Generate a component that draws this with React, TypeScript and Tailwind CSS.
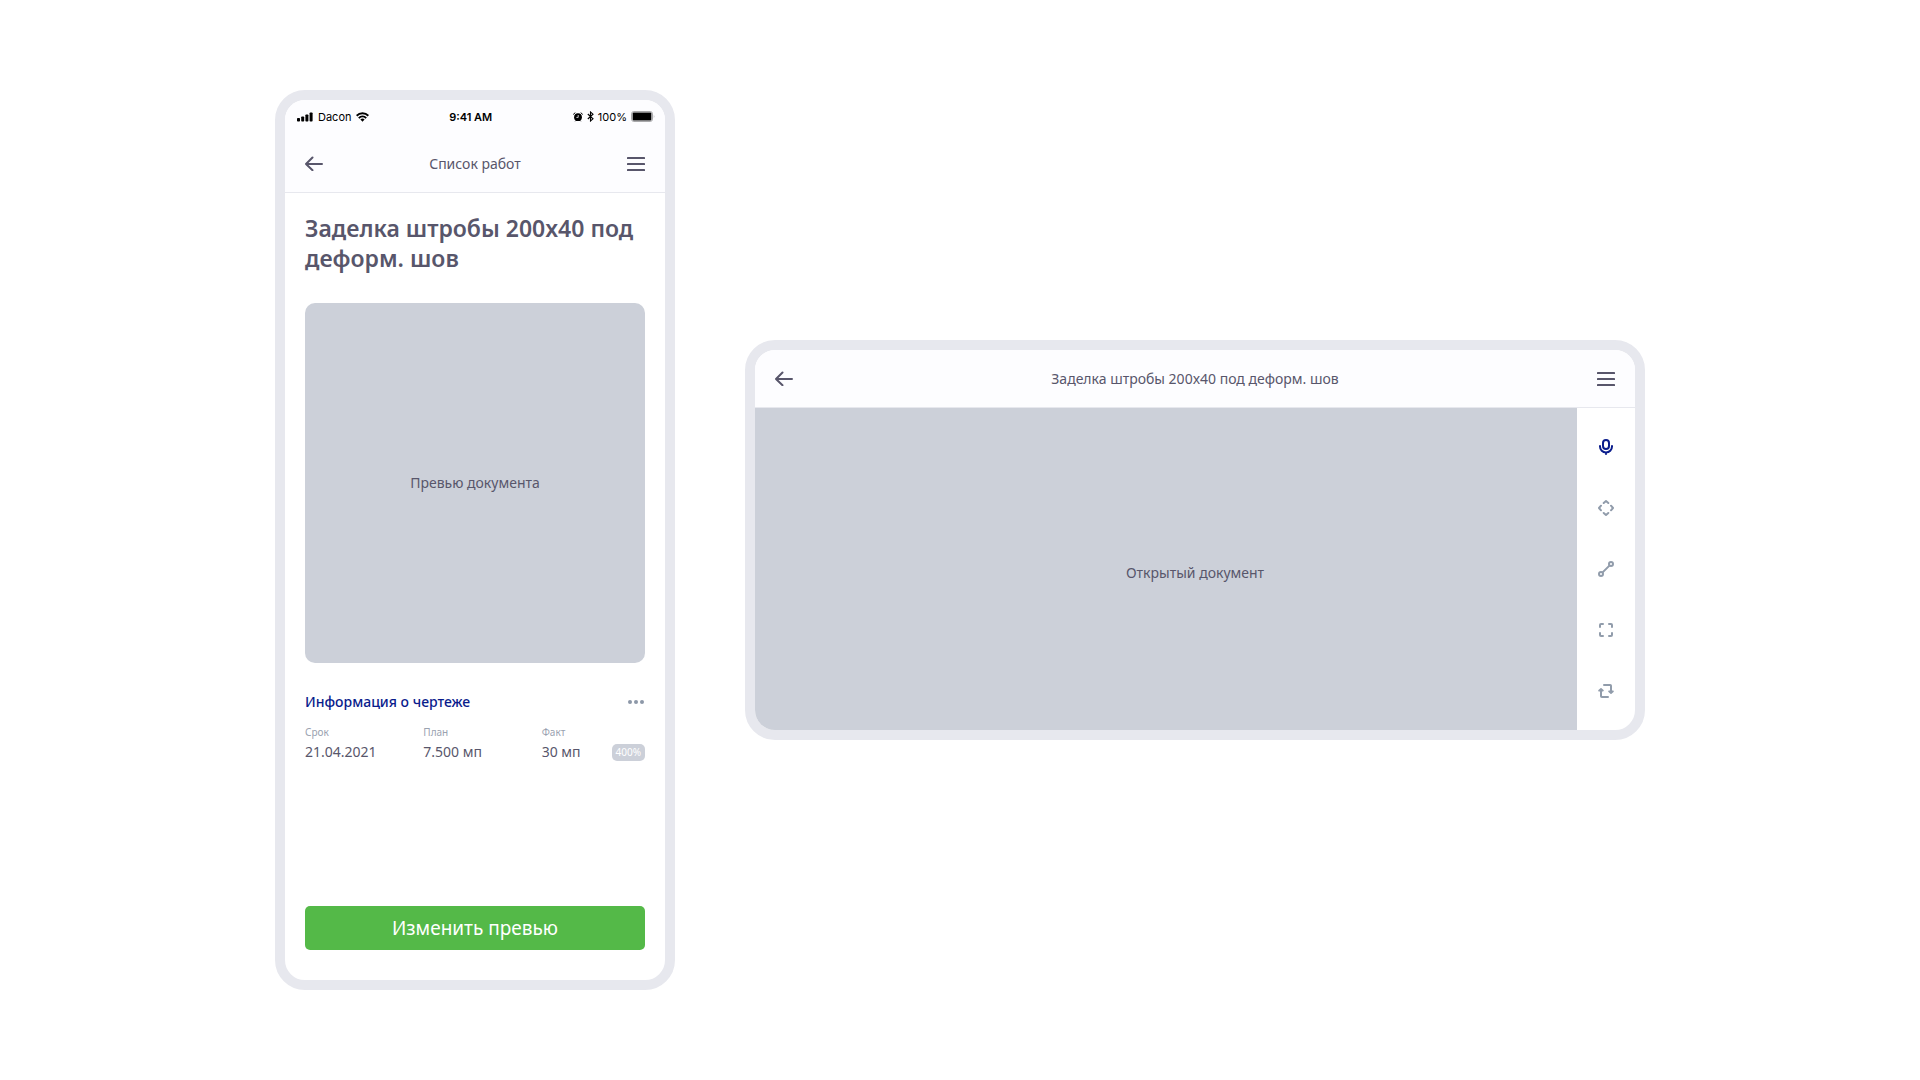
import type { ReactNode } from "react";

const details = [
  { label: "Срок", value: "21.04.2021" },
  { label: "План", value: "7.500 мп" },
  { label: "Факт", value: "30 мп", badge: "400%" },
];

function SignalIcon() {
  return (
    <svg width="16" height="10" viewBox="0 0 16 10" fill="currentColor" aria-hidden="true">
      <rect x="0" y="6" width="3" height="3.5" rx="0.8" />
      <rect x="4.2" y="4.5" width="3" height="5" rx="0.8" />
      <rect x="8.4" y="2.5" width="3" height="7" rx="0.8" />
      <rect x="12.6" y="0.5" width="3" height="9" rx="0.8" />
    </svg>
  );
}

function WifiIcon() {
  return (
    <svg width="13" height="10" viewBox="0 0 13 10" fill="none" stroke="currentColor" strokeWidth="2" aria-hidden="true">
      <path d="M0.6 3.7 A8.4 8.4 0 0 1 12.4 3.7" />
      <path d="M2.8 6.1 A5.3 5.3 0 0 1 10.2 6.1" />
      <path d="M4.4 7.6 A3 3 0 0 1 8.6 7.6 L6.5 9.8 Z" fill="currentColor" stroke="none" />
    </svg>
  );
}

function AlarmIcon() {
  return (
    <svg width="10" height="10" viewBox="0 0 10 10" aria-hidden="true">
      <circle cx="5" cy="5.2" r="3.9" fill="currentColor" />
      <path d="M0.5 2.2 L2 0.9 M9.5 2.2 L8 0.9" stroke="currentColor" strokeWidth="1" strokeLinecap="round" />
      <path d="M2.2 9.3 L2.8 8.6 M7.8 9.3 L7.2 8.6" stroke="currentColor" strokeWidth="0.8" />
      <path d="M5.2 3 V5.4 H3.4" fill="none" stroke="#fdfdff" strokeWidth="0.8" />
    </svg>
  );
}

function BluetoothIcon() {
  return (
    <svg width="7" height="11" viewBox="0 0 7 11" fill="none" stroke="currentColor" strokeWidth="1.1" aria-hidden="true">
      <path d="M0.8 3 L6 7.8 L3.5 10 V1 L6 3.2 L0.8 8" />
    </svg>
  );
}

function BatteryIcon() {
  return (
    <svg width="24" height="11" viewBox="0 0 24 11" aria-hidden="true">
      <rect x="0.5" y="0.5" width="21" height="10" rx="2.4" fill="none" stroke="#a9a9ab" />
      <rect x="1.6" y="1.6" width="18.8" height="7.8" rx="1" />
      <path d="M22.8 3.8 Q24 5.5 22.8 7.2 Z" fill="#a9a9ab" />
    </svg>
  );
}

function BackIcon() {
  return (
    <svg width="18" height="15" viewBox="0 0 18 15" fill="none" stroke="currentColor" strokeWidth="2" strokeLinecap="round" strokeLinejoin="round" aria-hidden="true">
      <path d="M17 8 H1 M7.5 1.5 L1 8 L7.5 14.2" />
    </svg>
  );
}

function MenuIcon() {
  return (
    <svg width="18" height="15" viewBox="0 0 18 15" fill="currentColor" aria-hidden="true">
      <rect y="1" width="18" height="2" rx="0.6" />
      <rect y="7" width="18" height="2" rx="0.6" />
      <rect y="13" width="18" height="2" rx="0.6" />
    </svg>
  );
}

function ToolIcon({ children }: { children: ReactNode }) {
  return (
    <svg width="18" height="18" viewBox="0 0 18 18" fill="none" stroke="currentColor" strokeWidth="2" strokeLinecap="round" strokeLinejoin="round" aria-hidden="true">
      {children}
    </svg>
  );
}

const tools = [
  {
    name: "Голосовая заметка",
    active: true,
    icon: (
      <>
        <rect x="6" y="2" width="6" height="9" rx="3" />
        <path d="M3 8 V8.5 A6 6 0 0 0 15 8.5 V8 M9 14.5 V16" />
      </>
    ),
  },
  {
    name: "Переместить",
    icon: <path d="M6.7 4 L9 2 L11.3 4 M6.7 14 L9 16 L11.3 14 M4 6.7 L2 9 L4 11.3 M14 6.7 L16 9 L14 11.3" />,
  },
  {
    name: "Измерить",
    icon: (
      <>
        <circle cx="4" cy="14" r="2" />
        <circle cx="14" cy="4" r="2" />
        <path d="M5.6 12.4 L12.4 5.6" />
      </>
    ),
  },
  {
    name: "На весь экран",
    icon: <path d="M3 6 V4 Q3 3 4 3 H6 M12 3 H14 Q15 3 15 4 V6 M15 12 V14 Q15 15 14 15 H12 M6 15 H4 Q3 15 3 14 V12" />,
  },
  {
    name: "Повернуть",
    icon: (
      <>
        <path d="M7 3 H13.2 Q14 3 14 3.8 V10 M11 15 H4.8 Q4 15 4 14.2 V8" />
        <path d="M12 9.4 H16 L14 11.2 Z M2 8.6 H6 L4 6.8 Z" fill="currentColor" strokeWidth="1.6" />
      </>
    ),
  },
];

function StatusBar() {
  return (
    <div className="flex h-[35px] items-center justify-between pb-0.5 pl-3 pr-[10px] font-['Inter',sans-serif] text-[11px] leading-4 text-black">
      <div className="flex items-center gap-1">
        <SignalIcon />
        <span className="pl-px">Dacon</span>
        <WifiIcon />
      </div>
      <span className="font-semibold">9:41 AM</span>
      <div className="flex items-center gap-1">
        <AlarmIcon />
        <BluetoothIcon />
        <span>100%</span>
        <BatteryIcon />
      </div>
    </div>
  );
}

function NavBar({ title }: { title: string }) {
  return (
    <div className="flex h-[58px] items-center justify-between border-b border-[#e7e8ee] px-5">
      <button type="button" aria-label="Назад">
        <BackIcon />
      </button>
      <span className="text-sm leading-5">{title}</span>
      <button type="button" aria-label="Меню">
        <MenuIcon />
      </button>
    </div>
  );
}

function PhoneScreen() {
  return (
    <section className="flex h-[900px] w-[400px] shrink-0 flex-col overflow-hidden rounded-[30px] border-10 border-[#e7e8ee] bg-white">
      <header className="bg-[#fdfdff]">
        <StatusBar />
        <NavBar title="Список работ" />
      </header>

      <main className="flex grow flex-col px-5 pb-[30px] pt-5">
        <h1 className="text-[23px] font-semibold leading-[30px]">Заделка штробы 200x40 под деформ. шов</h1>

        <div className="mt-[30px] flex h-[360px] items-center justify-center rounded-[10px] bg-[#ccd0d9] text-sm leading-5">
          Превью документа
        </div>

        <div className="mt-[29px] flex items-center justify-between">
          <h2 className="text-sm font-medium leading-5 text-[#0a1c8c]">Информация о чертеже</h2>
          <button type="button" aria-label="Ещё" className="text-[#8d98a8]">
            <svg width="18" height="4" viewBox="0 0 18 4" fill="currentColor" aria-hidden="true">
              <circle cx="3" cy="2" r="2" />
              <circle cx="9" cy="2" r="2" />
              <circle cx="15" cy="2" r="2" />
            </svg>
          </button>
        </div>

        <dl className="mt-3 grid grid-cols-3 gap-[15px]">
          {details.map((d) => (
            <div key={d.label}>
              <dt className="text-[10px] leading-4 text-[#9aa2b0]">{d.label}</dt>
              <dd className="mt-[2px] flex items-center justify-between text-sm leading-5">
                {d.value}
                {d.badge && (
                  <span className="rounded-[5px] bg-[#ccd0d9] px-1 text-[10px] leading-[17px] text-white">{d.badge}</span>
                )}
              </dd>
            </div>
          ))}
        </dl>

        <button type="button" className="mt-auto h-11 rounded-[5px] bg-[#54b948] text-[19px] text-white">
          Изменить превью
        </button>
      </main>
    </section>
  );
}

function LandscapeScreen() {
  return (
    <section className="flex h-[400px] w-[900px] shrink-0 flex-col overflow-hidden rounded-[30px] border-10 border-[#e7e8ee] bg-white">
      <header className="bg-[#fdfdff]">
        <NavBar title="Заделка штробы 200x40 под деформ. шов" />
      </header>
      <div className="flex grow">
        <main className="flex grow items-center justify-center bg-[#ccd0d9] pl-[58px] pt-2 text-sm leading-5">
          Открытый документ
        </main>
        <nav className="flex w-[58px] flex-col items-center justify-between py-[30px]">
          {tools.map((t) => (
            <button key={t.name} type="button" aria-label={t.name} className={t.active ? "text-[#0a1c8c]" : "text-[#919cab]"}>
              <ToolIcon>{t.icon}</ToolIcon>
            </button>
          ))}
        </nav>
      </div>
    </section>
  );
}

export default function App() {
  return (
    <div className="flex min-h-screen items-center justify-center gap-[70px] bg-white font-['Noto_Sans',sans-serif] text-[#58566b] [&_svg]:block">
      <PhoneScreen />
      <LandscapeScreen />
    </div>
  );
}
